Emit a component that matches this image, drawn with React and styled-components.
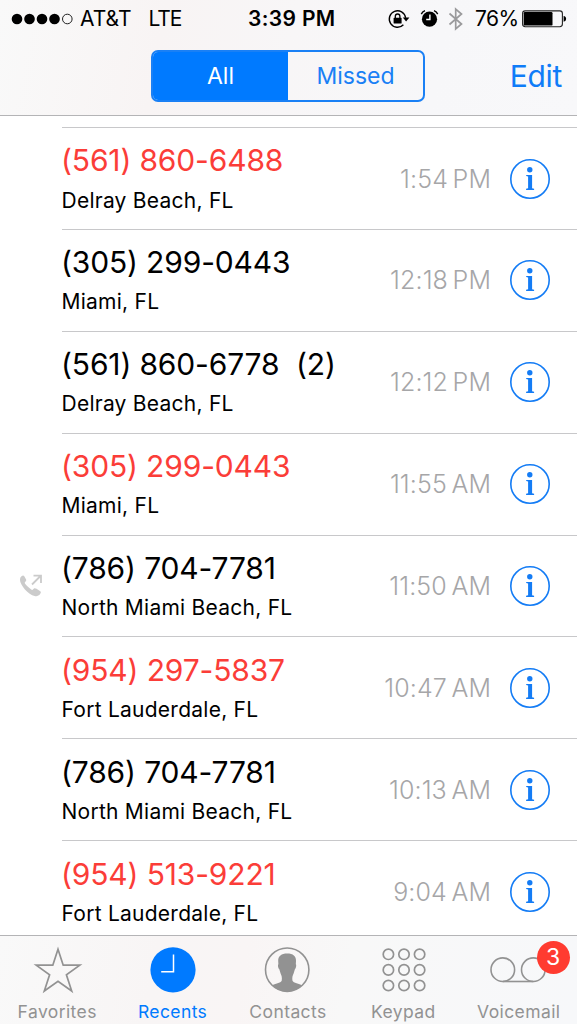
import React from "react";
import styled, {createGlobalStyle} from "styled-components";

const GlobalStyle = createGlobalStyle`
  * {
    box-sizing: border-box;
  }

  body {
    margin: 0;
    background-color: #ffffff;
    font-family: Inter, "Liberation Sans", sans-serif;
    overflow: hidden;
  }
`;

const Screen = styled.div`
  display: flex;
  flex-direction: column;
  width: 577px;
  height: 1024px;
  overflow: hidden;
  color: #000000;
`;

const Header = styled.header`
  flex: none;
  height: 116px;
  background: linear-gradient(100deg, #f9f9f9 0%, #f8f4f4 28%, #f8f6f7 50%, #f7f7f9 75%, #f8f8fa 100%);
  border-bottom: 1px solid #b4b4b6;
`;

const StatusBar = styled.div`
  display: grid;
  grid-template-columns: 248px 139px 1fr;
  align-items: center;
  height: 37px;
  font-size: 21px;
  line-height: 37px;
  white-space: nowrap;
`;

const StatusGroup = styled.div`
  display: flex;
  align-items: center;
  height: 37px;
`;

const StatusText = styled.span`
  margin-left: ${props => props.$left}px;
  letter-spacing: ${props => props.$spacing}px;
`;

const Clock = styled.div`
  font-weight: 600;
  letter-spacing: 0.35px;
`;

const StatusIcon = styled.svg`
  flex: none;
  margin-left: ${props => props.$left || 0}px;
`;

const NavBar = styled.div`
  display: grid;
  grid-template-columns: 151px 274px 1fr;
  align-items: center;
  height: 77px;
`;

const Segments = styled.div`
  grid-column: 2;
  display: flex;
  height: 52px;
  border: 2px solid #1a80f5;
  border-radius: 7px;
  overflow: hidden;
`;

const Segment = styled.button`
  flex: 1;
  padding: 0;
  border: 0;
  font: inherit;
  font-size: 23px;
  letter-spacing: 0;
  color: ${props => props.$active ? "#ffffff" : "#1a80f5"};
  background-color: ${props => props.$active ? "#007aff" : "transparent"};
`;

const EditButton = styled.button`
  justify-self: end;
  margin-right: 15px;
  padding: 0;
  border: 0;
  background: none;
  font: inherit;
  font-size: 30px;
  letter-spacing: -0.3px;
  color: #0f7cf8;
`;

const CallList = styled.main`
  flex: 1;
  min-height: 0;
  overflow: hidden;
  padding-top: 11px;
`;

const CallRow = styled.div`
  display: flex;
  height: 101.9px;
`;

const CallKind = styled.div`
  flex: none;
  width: 62px;
  padding: 39px 0 0 19px;
`;

const CallBody = styled.div`
  flex: 1;
  display: flex;
  justify-content: space-between;
  padding-right: 27px;
  border-top: 1px solid #c8c8ca;
`;

const CallerNumber = styled.div`
  margin: 12.4px 0 0 -1px;
  font-size: 30px;
  line-height: 40px;
  letter-spacing: -0.15px;
  white-space: pre;
  color: ${props => props.$missed ? "#fb3d38" : "#000000"};
`;

const CallerCity = styled.div`
  margin: 8.2px 0 0 -0.5px;
  font-size: 21px;
  line-height: 24px;
  letter-spacing: 0.25px;
`;

const CallMeta = styled.div`
  display: flex;
  align-items: center;
  height: 101px;
`;

const CallTime = styled.div`
  font-size: 25px;
  font-weight: 300;
  letter-spacing: 0.1px;
  word-spacing: -2.5px;
  color: #a6a6a8;
`;

const InfoIcon = styled.svg`
  margin-left: 19px;
`;

const TabBar = styled.nav`
  flex: none;
  display: grid;
  grid-template-columns: repeat(5, 1fr);
  height: 89px;
  border-top: 1px solid #b4b4b6;
  background: linear-gradient(100deg, #f9f9f9 0%, #f8f5f5 27%, #f9f5f5 42%, #f8f8f8 60%, #f7f8fa 100%);
`;

const Tab = styled.div`
  position: relative;
  display: flex;
  flex-direction: column;
  align-items: center;
  padding-top: 10px;
  color: ${props => props.$active ? "#007aff" : "#929292"};
`;

const TabLabel = styled.span`
  margin-top: 6px;
  margin-left: -1px;
  font-size: 17.5px;
  line-height: 24px;
  letter-spacing: 0.4px;
`;

const Badge = styled.span`
  position: absolute;
  top: 5px;
  left: 75px;
  width: 33px;
  height: 33px;
  border-radius: 50%;
  background-color: #ff3b30;
  color: #ffffff;
  font-size: 23px;
  line-height: 33px;
  text-align: center;
`;

const calls = [
  {number: "(561) 860-6488", city: "Delray Beach, FL", time: "1:54 PM", missed: true},
  {number: "(305) 299-0443", city: "Miami, FL", time: "12:18 PM"},
  {number: "(561) 860-6778  (2)", city: "Delray Beach, FL", time: "12:12 PM"},
  {number: "(305) 299-0443", city: "Miami, FL", time: "11:55 AM", missed: true},
  {number: "(786) 704-7781", city: "North Miami Beach, FL", time: "11:50 AM", outgoing: true},
  {number: "(954) 297-5837", city: "Fort Lauderdale, FL", time: "10:47 AM", missed: true},
  {number: "(786) 704-7781", city: "North Miami Beach, FL", time: "10:13 AM"},
  {number: "(954) 513-9221", city: "Fort Lauderdale, FL", time: "9:04 AM", missed: true},
];

const Signal = () => (
  <StatusIcon $left={11} width="62" height="14" viewBox="0 0 62 14">
    {[6, 18.5, 31, 43.5].map(x => <circle key={x} cx={x} cy="7" r="5.3"/>)}
    <circle cx="56.3" cy="7" r="4.8" fill="none" stroke="#222" strokeWidth="1"/>
  </StatusIcon>
);

const RotationLock = () => (
  <StatusIcon width="23" height="20" viewBox="0 0 23 20" fill="none">
    <path d="M18.6 8.8A8.2 8.2 0 1 0 16.4 15.7" stroke="#000" strokeWidth="1.4"/>
    <path d="M15.8 8.6h6.6l-3.3 3.8z" fill="#000"/>
    <rect x="6.6" y="8.8" width="8" height="5.8" rx="0.6" fill="#000"/>
    <path d="M8.3 9.3V7.3a2.3 2.3 0 0 1 4.6 0v2" stroke="#000" strokeWidth="1.3"/>
  </StatusIcon>
);

const Alarm = () => (
  <StatusIcon $left={10} width="20" height="20" viewBox="0 0 20 20" fill="none">
    <circle cx="9.5" cy="10.2" r="7.6" fill="#000"/>
    <path d="M9.9 5.6v4.9H6.2" stroke="#fff" strokeWidth="1.4"/>
    <path d="M1.3 5.1C2 3.5 3.3 2.3 5 1.6M17.7 5.1C17 3.5 15.7 2.3 14 1.6" stroke="#000" strokeWidth="1.4"/>
  </StatusIcon>
);

const Bluetooth = () => (
  <StatusIcon $left={8} width="16" height="24" viewBox="0 0 16 24" fill="none">
    <path d="M1.5 6.5L13.5 17 7.7 22V2l5.8 5L1.5 17.5" stroke="#9a9a9c" strokeWidth="1.7"/>
  </StatusIcon>
);

const Battery = () => (
  <StatusIcon $left={4} width="45" height="18" viewBox="0 0 45 18">
    <rect x="0.6" y="0.9" width="39.8" height="15.8" rx="2.6" fill="none" stroke="#222" strokeWidth="1.1"/>
    <rect x="1.7" y="2" width="28.8" height="13.6" rx="1.2"/>
    <path d="M41.6 5.9c1.7.3 2.5 1.4 2.5 2.9s-.8 2.6-2.5 2.9z"/>
  </StatusIcon>
);

const Info = () => (
  <InfoIcon width="40" height="40" viewBox="0 0 40 40">
    <circle cx="20" cy="20" r="19.2" fill="none" stroke="#147cf5" strokeWidth="1.6"/>
    <circle cx="19.8" cy="10.8" r="2.7" fill="#147cf5"/>
    <path d="M16.2 15.9h5.9v13.4l2 .5V31h-8v-1.2l2-.5V17.5l-1.9-.5z" fill="#147cf5"/>
  </InfoIcon>
);

const OutgoingCall = () => (
  <svg width="24" height="24" viewBox="0 0 24 24" fill="none">
    <path
      d="M1.4 3.5C2.8 1.4 4.4.9 5.3 2.2L7.1 5.5c.5 1-.1 1.7-1.2 2.7-.5.5 0 1.4 1.7 3.4 2.2 2.3 4.3 3.9 5.4 4.3.8.2 1.4-1.1 2.3-1.6.6-.3 1.2 0 1.8.3l3.9 2.5c1.3.9 1.1 1.6.1 3-1.3 1.8-3.3 2.4-5.5 1.9-3.1-.9-6.7-3.3-9.7-6.6C3 12 1 8.5 1 6c0-1 .1-1.8.4-2.5z"
      fill="#cbcbcb"/>
    <path d="M13 10.5L21.5 2M14.5 1.6h7.5v7.5" stroke="#cbcbcb" strokeWidth="1.8"/>
  </svg>
);

const StarIcon = () => (
  <svg width="50" height="48" viewBox="0 0 50 48" fill="none">
    <path
      d="M25 3.2L30.2 19.2H46.8L33.4 28.8L38.7 45L25 35.2L11.3 45L16.6 28.8L3.2 19.2H19.8Z"
      stroke="#929292" strokeWidth="1.7"/>
  </svg>
);

const RecentsIcon = () => (
  <svg width="50" height="48" viewBox="0 0 50 48" fill="none">
    <circle cx="25" cy="23.8" r="22.6" fill="#007aff"/>
    <path d="M25.5 8.5V25.7H13.2" stroke="#fff" strokeWidth="1.5"/>
  </svg>
);

const ContactsIcon = () => (
  <svg width="50" height="48" viewBox="0 0 50 48" fill="none">
    <circle cx="24.2" cy="23.7" r="21.7" stroke="#929292" strokeWidth="1.6"/>
    <path
      d="M24.2 7.6c-5.8 0-9.2 2.5-9 7.5l.2 3.2c-.8.5-.4 3.8.9 5l1.3 4.1c1.1 2.2 1.6 4.2 1.1 7.4-.8 2.2-7 3-9.6 4.600 4 3.700 8.700 5.800 15.100 5.800s10.900-2.100 14.900-5.800c-2.600-1.600-8.800-2.400-9.600-4.600-.5-3.200 0-5.200 1.100-7.400l1.300-4.100c1.300-1.200 1.700-4.500.9-5l.2-3.200C33.200 10.100 30 7.600 24.200 7.600z"
      fill="#929292"/>
  </svg>
);

const KeypadIcon = () => (
  <svg width="50" height="48" viewBox="0 0 50 48" fill="none" stroke="#929292" strokeWidth="1.7">
    {[8.3, 23.9, 39.5].map(y => (
      [9.4, 25, 40.6].map(x => <circle key={`${x}-${y}`} cx={x} cy={y} r="5.2"/>)
    ))}
  </svg>
);

const VoicemailIcon = () => (
  <svg width="60" height="48" viewBox="0 0 60 48" fill="none" stroke="#929292" strokeWidth="1.6">
    <circle cx="13.8" cy="23.7" r="11.8"/>
    <circle cx="44.3" cy="23.7" r="11.8"/>
    <path d="M13.8 35.5H44.3"/>
  </svg>
);

const tabs = [
  {label: "Favorites", Icon: StarIcon},
  {label: "Recents", Icon: RecentsIcon, active: true},
  {label: "Contacts", Icon: ContactsIcon},
  {label: "Keypad", Icon: KeypadIcon},
  {label: "Voicemail", Icon: VoicemailIcon, badge: 3},
];

const App = () => (
  <>
    <GlobalStyle/>
    <Screen>
      <Header>
        <StatusBar>
          <StatusGroup>
            <Signal/>
            <StatusText $left={7} $spacing={0}>AT&amp;T</StatusText>
            <StatusText $left={17} $spacing={-1}>LTE</StatusText>
          </StatusGroup>
          <Clock>3:39 PM</Clock>
          <StatusGroup>
            <RotationLock/>
            <Alarm/>
            <Bluetooth/>
            <StatusText $left={11} $spacing={-0.6}>76%</StatusText>
            <Battery/>
          </StatusGroup>
        </StatusBar>
        <NavBar>
          <Segments>
            <Segment $active>All</Segment>
            <Segment>Missed</Segment>
          </Segments>
          <EditButton>Edit</EditButton>
        </NavBar>
      </Header>
      <CallList>
        {calls.map((call, index) => (
          <CallRow key={index}>
            <CallKind>{call.outgoing && <OutgoingCall/>}</CallKind>
            <CallBody>
              <div>
                <CallerNumber $missed={call.missed}>{call.number}</CallerNumber>
                <CallerCity>{call.city}</CallerCity>
              </div>
              <CallMeta>
                <CallTime>{call.time}</CallTime>
                <Info/>
              </CallMeta>
            </CallBody>
          </CallRow>
        ))}
      </CallList>
      <TabBar>
        {tabs.map(({label, Icon, active, badge}) => (
          <Tab key={label} $active={active}>
            <Icon/>
            <TabLabel>{label}</TabLabel>
            {badge && <Badge>{badge}</Badge>}
          </Tab>
        ))}
      </TabBar>
    </Screen>
  </>
);

export default App;
